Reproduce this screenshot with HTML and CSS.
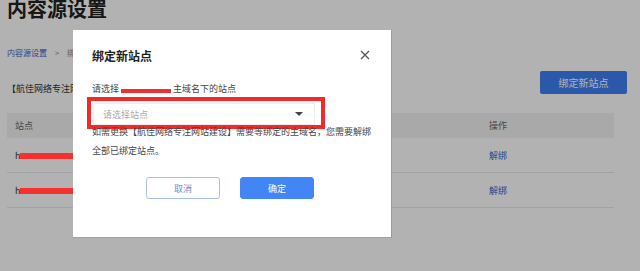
FILE: index.html
```html
<!DOCTYPE html>
<html lang="zh-CN">
<head>
    <meta charset="UTF-8">
    <meta name="viewport" content="width=device-width, initial-scale=1.0">
    <title>内容源设置</title>
    <link rel="stylesheet" href="styles.css">
</head>
<body>
    <div class="page">
        <h1 class="page-title">内容源设置</h1>
        <div class="breadcrumb">
            <a href="#">内容源设置</a>
            <span class="sep">&gt;</span>
            <span class="current">绑定新站点</span>
        </div>

        <div class="toolbar">
            <span class="site-name">【航佳网络专注网站建设】</span>
            <button type="button" class="btn-bind">绑定新站点</button>
        </div>

        <table class="site-table">
            <thead>
                <tr>
                    <th>站点</th>
                    <th class="col-op">操作</th>
                </tr>
            </thead>
            <tbody>
                <tr>
                    <td>h<span class="redact redact-a"></span></td>
                    <td class="col-op"><a href="#">解绑</a></td>
                </tr>
                <tr>
                    <td>h<span class="redact redact-b"></span></td>
                    <td class="col-op"><a href="#">解绑</a></td>
                </tr>
            </tbody>
        </table>
    </div>

    <div class="mask"></div>

    <div class="dialog">
        <div class="dialog-head">
            <h2>绑定新站点</h2>
            <span class="dialog-close">
                <svg width="10" height="10" viewBox="0 0 10 10">
                    <path d="M1 1L9 9M9 1L1 9" stroke="#555" stroke-width="1.3" fill="none"/>
                </svg>
            </span>
        </div>

        <div class="dialog-body">
            <p class="hint">请选择 <span class="redact-inline"></span> 主域名下的站点</p>
            <div class="mark-box">
                <div class="select">
                    <span class="placeholder">请选择站点</span>
                    <span class="caret"></span>
                </div>
            </div>
            <p class="note">如需更换【航佳网络专注网站建设】需要等绑定的主域名，您需要解绑<br>全部已绑定站点。</p>
        </div>

        <div class="dialog-foot">
            <button type="button" class="btn-cancel">取消</button>
            <button type="button" class="btn-ok">确定</button>
        </div>
    </div>
</body>
</html>
```

FILE: styles.css
```css
body {
    margin: 0;
    background: #fff;
    font-family: "Noto Sans CJK SC", "Noto Sans", sans-serif;
    color: #333;
    overflow: hidden;
}
.page {
    padding: 0 13px 0 7px;
}
.page-title {
    margin: -4px 0 0;
    font-size: 20px;
    line-height: 26px;
    font-weight: bold;
    color: #222;
}
.breadcrumb {
    margin-top: 25px;
    font-size: 8px;
    line-height: 12px;
    color: #888;
}
.breadcrumb a {
    color: #3a5fc8;
    text-decoration: none;
}
.breadcrumb .sep {
    margin: 0 6px;
}
.toolbar {
    display: flex;
    justify-content: space-between;
    align-items: flex-end;
    margin-top: 12px;
}
.site-name {
    font-size: 9px;
    line-height: 12px;
    margin-bottom: -1px;
    color: #333;
}
.btn-bind {
    width: 87px;
    height: 23px;
    border: none;
    border-radius: 2px;
    background: #3f7ff4;
    color: #fff;
    font-family: inherit;
    font-size: 10px;
    padding: 0;
}
.site-table {
    width: 607px;
    margin-top: 19px;
    border-collapse: collapse;
    font-size: 9px;
}
.site-table th {
    height: 25px;
    padding: 0 0 0 8px;
    background: #f3f3f3;
    font-weight: normal;
    color: #666;
    text-align: left;
}
.site-table td {
    height: 34px;
    padding: 0 0 0 8px;
    border-bottom: 1px solid #e8e8e8;
    color: #333;
}
.site-table .col-op {
    width: 125px;
}
.site-table a {
    color: #3a63c9;
    text-decoration: none;
}
.redact {
    position: relative;
    z-index: 20;
    display: inline-block;
    height: 6px;
    background: #f43030;
    vertical-align: middle;
}
.redact-a {
    width: 58px;
}
.redact-b {
    width: 64px;
}
.mask {
    position: fixed;
    inset: 0;
    z-index: 10;
    background: rgba(0, 0, 0, 0.3);
}
.dialog {
    position: absolute;
    left: 73px;
    top: 30px;
    z-index: 30;
    width: 319px;
    height: 208px;
    box-sizing: border-box;
    padding: 0 19px;
    background: #fff;
    border-right: 1px solid #9a9a9a;
    border-bottom: 1px solid #a0a0a0;
}
.dialog-head {
    display: flex;
    justify-content: space-between;
    align-items: center;
    height: 50px;
}
.dialog-head h2 {
    margin: 0;
    font-size: 12px;
    font-weight: bold;
    color: #222;
}
.dialog-close {
    display: flex;
    margin-right: 2px;
}
.hint {
    margin: 3px 0 0;
    font-size: 9px;
    line-height: 12px;
    color: #444;
}
.redact-inline {
    display: inline-block;
    width: 50px;
    height: 4px;
    background: #f03030;
    vertical-align: -1px;
}
.mark-box {
    width: 222px;
    margin: 2px 0 -7px -5px;
    padding: 2px 6px 0 2px;
    border: 4px solid #f22a2a;
}
.select {
    display: flex;
    justify-content: space-between;
    align-items: center;
    height: 22px;
    padding: 0 11px 0 9px;
    border: 1px solid #eee;
    box-sizing: border-box;
}
.placeholder {
    font-size: 9px;
    color: #aaa;
}
.caret {
    width: 0;
    height: 0;
    border-left: 4px solid transparent;
    border-right: 4px solid transparent;
    border-top: 4px solid #444;
}
.note {
    margin: 0;
    font-size: 9px;
    line-height: 19px;
    color: #444;
}
.dialog-foot {
    display: flex;
    justify-content: center;
    gap: 20px;
    margin-top: 17px;
    padding-right: 4px;
}
.dialog-foot button {
    width: 74px;
    height: 22px;
    border-radius: 3px;
    font-family: inherit;
    font-size: 9px;
    padding: 0;
}
.btn-cancel {
    background: #fff;
    border: 1px solid #a9c0ea;
    color: #6f8fc8;
}
.btn-ok {
    background: #4285f4;
    border: 1px solid #4285f4;
    color: #fff;
}
```
